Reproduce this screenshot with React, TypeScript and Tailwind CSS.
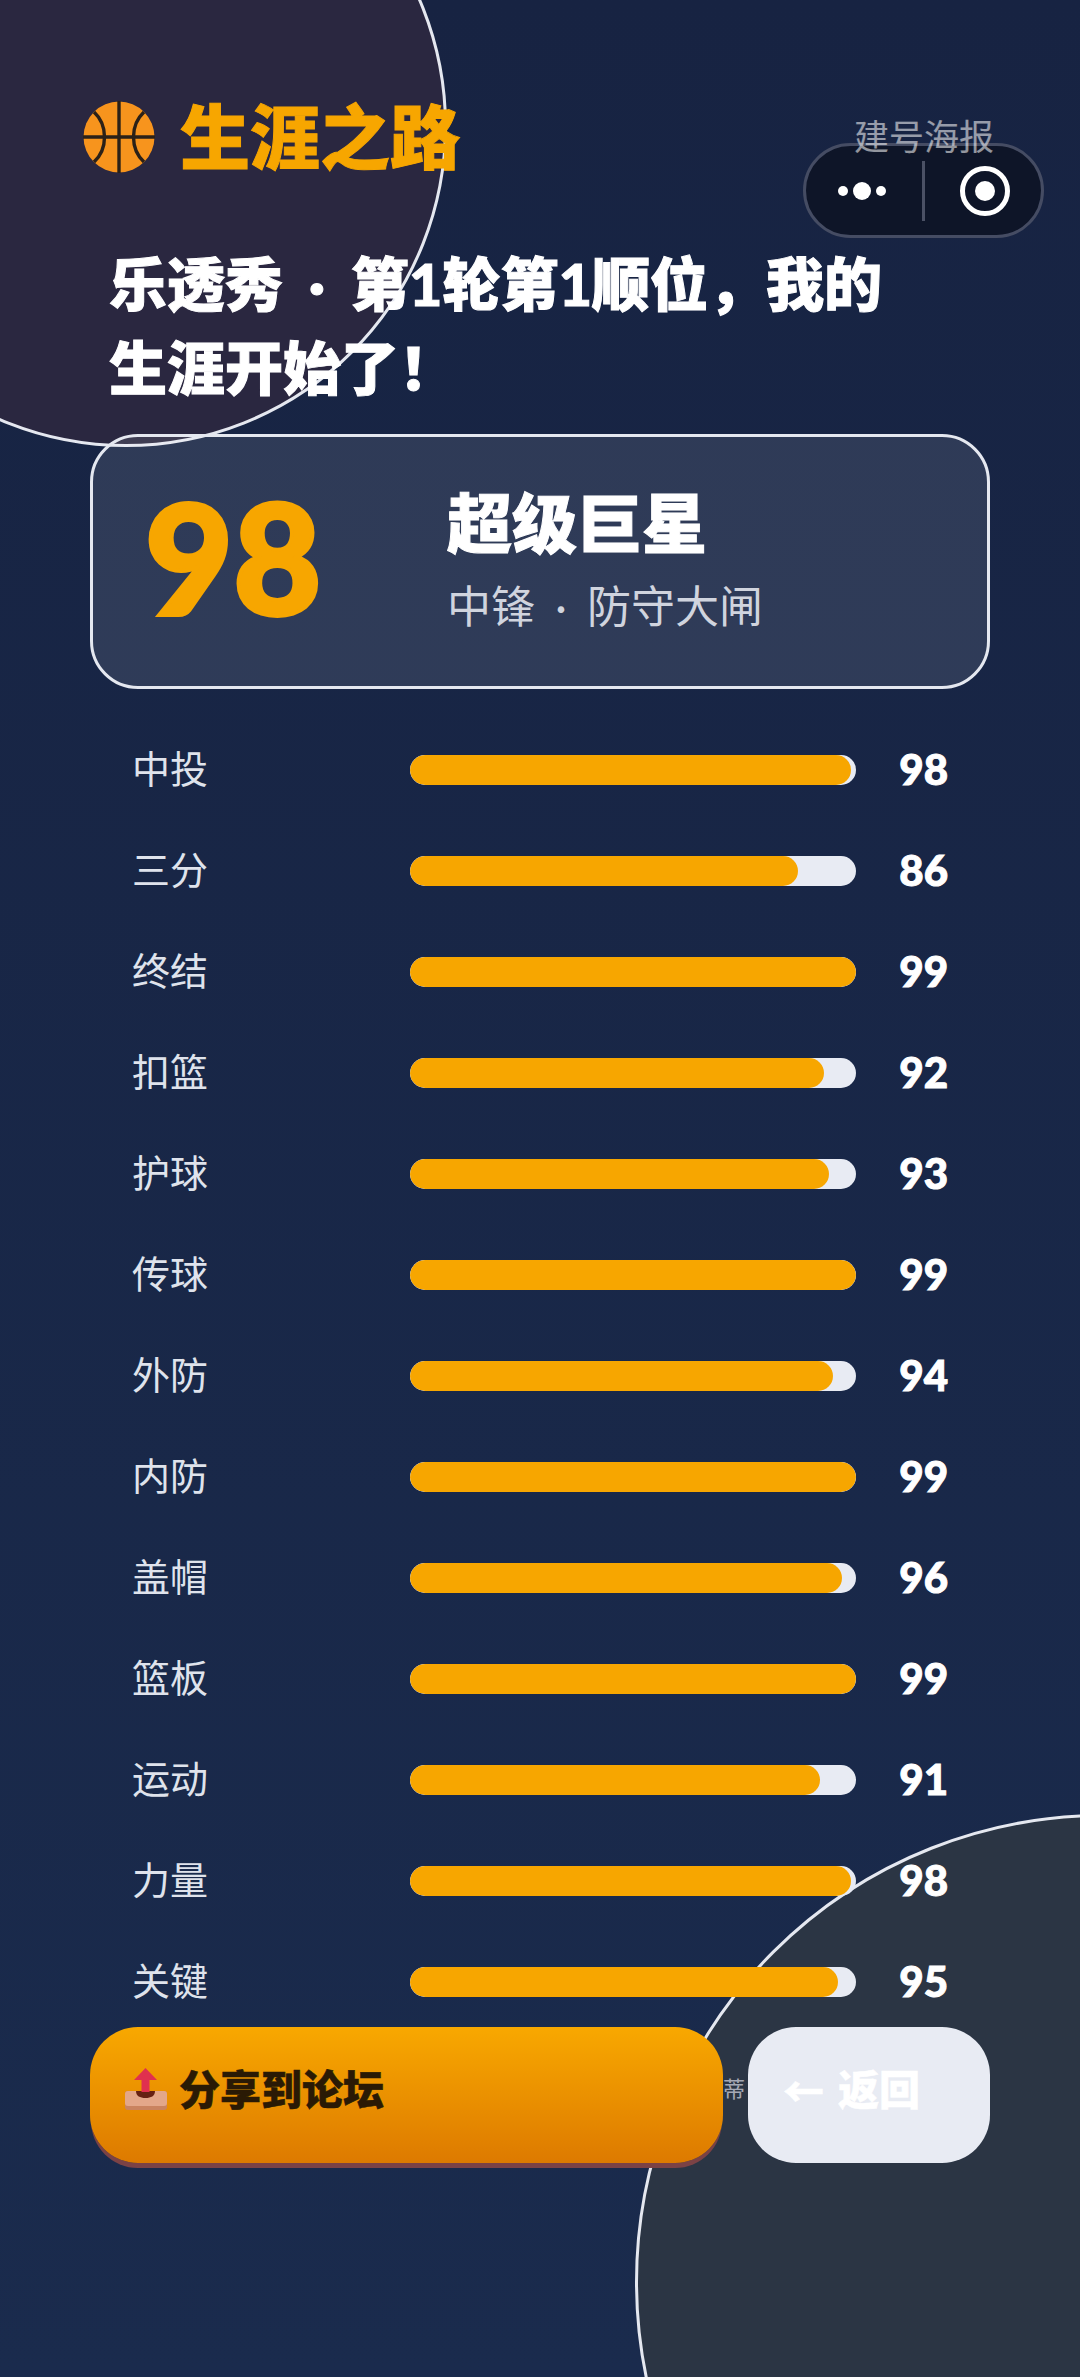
const stats = [
  { name: "中投", value: 98 },
  { name: "三分", value: 86 },
  { name: "终结", value: 99 },
  { name: "扣篮", value: 92 },
  { name: "护球", value: 93 },
  { name: "传球", value: 99 },
  { name: "外防", value: 94 },
  { name: "内防", value: 99 },
  { name: "盖帽", value: 96 },
  { name: "篮板", value: 99 },
  { name: "运动", value: 91 },
  { name: "力量", value: 98 },
  { name: "关键", value: 95 },
];

const Basketball = () => (
  <svg width="72" height="72" viewBox="0 0 72 72" className="shrink-0">
    <circle cx="36" cy="36" r="35.5" fill="#f7941d" />
    <g fill="none" stroke="#2b2118" strokeWidth="3.4">
      <path d="M36 0V72" />
      <path d="M0 36H72" />
      <path d="M11 11C25 24 25 48 11 61" />
      <path d="M61 11C47 24 47 48 61 61" />
    </g>
  </svg>
);

const Outbox = () => (
  <svg width="44" height="42" viewBox="0 0 44 42" className="shrink-0">
    <rect x="1" y="23" width="42" height="19" rx="3" fill="#c98360" />
    <rect x="1" y="23" width="42" height="15" rx="3" fill="#e3a78a" />
    <path d="M12 23H31C31 28 27 30 21.5 30C16 30 12 28 12 23Z" fill="#662113" />
    <path d="M21.5 0L33 12H25.5V24H17.5V12H10Z" fill="#e0304f" />
  </svg>
);

const Capsule = () => (
  <div className="absolute left-[803px] top-[143px] flex h-[95px] w-[241px] items-center rounded-full border-[3px] border-[#454c63] bg-[#0e1528]">
    <div className="flex w-[116px] items-center justify-center gap-[5px] pr-[4px]">
      <span className="h-[10px] w-[10px] rounded-full bg-white" />
      <span className="h-[18px] w-[18px] rounded-full bg-white" />
      <span className="h-[10px] w-[10px] rounded-full bg-white" />
    </div>
    <div className="h-[60px] w-[3px] bg-[#4b5165]" />
    <div className="flex flex-1 items-center justify-center pl-[3px]">
      <div className="flex h-[50px] w-[50px] items-center justify-center rounded-full border-[5px] border-white">
        <span className="h-[20px] w-[20px] rounded-full bg-white" />
      </div>
    </div>
  </div>
);

export default function App() {
  return (
    <div className="relative h-[2377px] w-[1080px] overflow-hidden bg-gradient-to-b from-[#172342] to-[#1a2b4d] font-['Lato','Noto_Sans_CJK_SC',sans-serif] text-white">
      {/* background circles */}
      <div className="absolute -left-[195px] -top-[195px] h-[642px] w-[642px] rounded-full border-[3px] border-[#e5e8f0] bg-[#2a2740]" />
      <div className="absolute left-[635px] top-[1814px] h-[936px] w-[936px] rounded-full border-[3px] border-[#e5e8f0] bg-[#2b3544]" />
      <div className="absolute left-[723px] top-[2074px] text-[22px] leading-[30px] text-[#a5a9b5]">蒂</div>

      <div className="relative flex flex-col px-[90px] pt-[97px]">
        <div className="-ml-[7px] flex h-[80px] items-center gap-[25px]">
          <Basketball />
          <h1 className="text-[70px] leading-[80px] font-black text-[#f7a600] [-webkit-text-stroke:1px_#f7a600]">生涯之路</h1>
        </div>

        <h2 className="mt-[65px] w-[800px] pl-[19px] text-[58px] leading-[84px] font-black [-webkit-text-stroke:1px_#fff]">
          乐透秀<span className="mx-[12px]"> · </span>第1轮第1顺位，我的
          <br />
          生涯开始了！
        </h2>

        <div className="mt-[24px] flex h-[255px] items-center rounded-[48px] border-[3px] border-[#e5e8f0] bg-white/10 pl-[52px]">
          <div className="w-[302px] pb-[12px] text-[152px] leading-none font-black text-[#f7a600] [-webkit-text-stroke:4px_#f7a600]">98</div>
          <div className="flex flex-col gap-[17px] pb-[5px]">
            <div className="text-[65px] leading-[76px] font-black [-webkit-text-stroke:1px_#fff]">超级巨星</div>
            <div className="text-[44px] leading-[56px] text-[#d0d4de]">
              中锋<span className="mx-[9px]"> · </span>防守大闸
            </div>
          </div>
        </div>

        <div className="mt-[66px] flex flex-col gap-[71px] pl-[42px] pr-[42px]">
          {stats.map((s) => (
            <div key={s.name} className="flex h-[30px] items-center">
              <div className="w-[278px] pb-[5px] text-[38px] leading-[30px] text-[#dfe3ec]">{s.name}</div>
              <div className="h-[30px] w-[446px] overflow-hidden rounded-full bg-[#e8ebf3]">
                <div className="h-full rounded-full bg-[#f7a600]" style={{ width: `calc(${s.value}% + 4px)` }} />
              </div>
              <div className="flex-1 pb-[3px] text-right text-[42px] leading-[30px] font-black [-webkit-text-stroke:1px_#fff]">{s.value}</div>
            </div>
          ))}
        </div>

        <div className="mt-[30px] flex h-[136px] gap-[25px]">
          <div className="flex w-[633px] items-center gap-[11px] rounded-[48px] bg-gradient-to-b from-[#f8a800] to-[#dd7a00] pb-[12px] pl-[34px] shadow-[0_6px_0_-1px_#7b4245]">
            <Outbox />
            <span className="text-[41px] leading-none font-black text-[#2a1a05] [-webkit-text-stroke:0.5px_#2a1a05]">分享到论坛</span>
          </div>
          <div className="flex flex-1 items-center gap-[14px] rounded-[48px] bg-[#e8ebf3] pb-[12px] pl-[35px] text-[41px] leading-none font-black [-webkit-text-stroke:0.5px_#fff]">
            <span className="font-['Noto_Sans_CJK_SC',sans-serif]">←</span>
            <span>返回</span>
          </div>
        </div>
      </div>

      <Capsule />
      <div className="absolute left-[854px] top-[116px] text-[35px] leading-[40px] text-white/55">建号海报</div>
    </div>
  );
}
